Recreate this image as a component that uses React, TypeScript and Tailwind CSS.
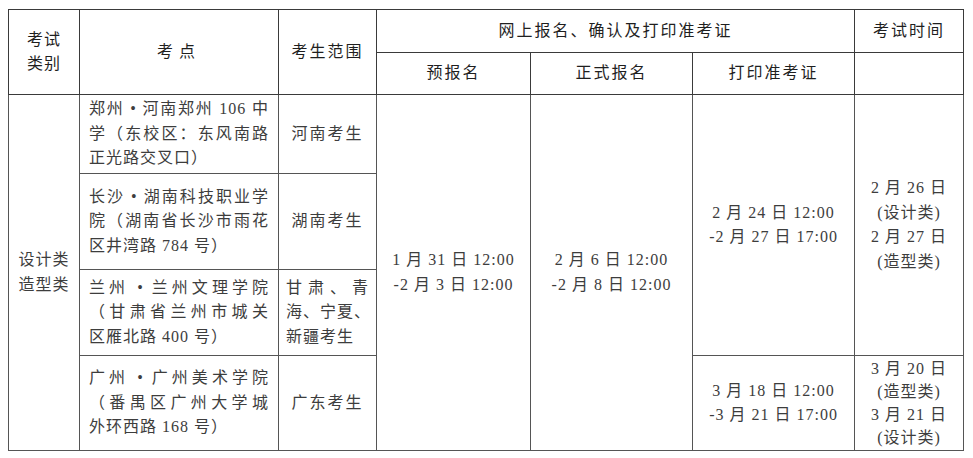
import React from 'react';

const font = { fontFamily: '"Liberation Serif", "Noto Sans CJK SC", serif' };

function Lines({ lines, justify = false }: { lines: string[]; justify?: boolean }) {
  return (
    <>
      {lines.map((l, i) => (
        <div
          key={i}
          className={
            'whitespace-nowrap' +
            (justify && i < lines.length - 1
              ? ' text-justify [text-align-last:justify] [text-justify:inter-character]'
              : '')
          }
        >
          {l}
        </div>
      ))}
    </>
  );
}

const th = 'border border-[#3a3a3a] text-center align-middle text-[#1f1f1f] whitespace-nowrap';
const td = 'border border-[#555] align-middle text-[#3d3d3d]';

const sites = [
  { lines: ['郑州 • 河南郑州 106 中', '学（东校区：东风南路', '正光路交叉口）'], scope: ['河南考生'], h: 'h-[79px]' },
  { lines: ['长沙 • 湖南科技职业学', '院（湖南省长沙市雨花', '区井湾路 784 号）'], scope: ['湖南考生'], h: 'h-[96px]' },
  { lines: ['兰州 • 兰州文理学院', '（甘肃省兰州市城关', '区雁北路 400 号）'], scope: ['甘肃、青', '海、宁夏、', '新疆考生'], h: 'h-[86px]' },
  { lines: ['广州 • 广州美术学院', '（番禺区广州大学城', '外环西路 168 号）'], scope: ['广东考生'], h: 'h-[95px]' },
];

export default function App() {
  return (
    <div className="bg-white w-[973px] h-[458px] pt-[9px] pl-[8px]" style={font}>
      <table className="table-fixed border-collapse w-[955px] text-[16px] leading-[24.5px] tracking-[1px]">
        <colgroup>
          <col className="w-[71px]" />
          <col className="w-[199px]" />
          <col className="w-[98px]" />
          <col className="w-[154px]" />
          <col className="w-[162px]" />
          <col className="w-[162px]" />
          <col className="w-[109px]" />
        </colgroup>
        <tbody>
          <tr className="h-[43px]">
            <td rowSpan={2} className={th}>
              <div>考试</div>
              <div>类别</div>
            </td>
            <td rowSpan={2} className={th + ' tracking-[6px]'}>考点</td>
            <td rowSpan={2} className={th + ' tracking-[2px]'}>考生范围</td>
            <td colSpan={3} className={th + ' tracking-[2px]'}>网上报名、确认及打印准考证</td>
            <td className={th + ' tracking-[2px]'}>考试时间</td>
          </tr>
          <tr className="h-[42px]">
            <td className={th + ' tracking-[2px]'}>预报名</td>
            <td className={th + ' tracking-[2px]'}>正式报名</td>
            <td className={th + ' tracking-[2px]'}>打印准考证</td>
            <td className={th}></td>
          </tr>
          {sites.map((s, i) => (
            <tr key={i} className={s.h}>
              {i === 0 && (
                <td rowSpan={4} className={td + ' text-center'}>
                  <div>设计类</div>
                  <div>造型类</div>
                </td>
              )}
              <td className={td + ' px-[9px]'}>
                <Lines lines={s.lines} justify />
              </td>
              <td className={td + (s.scope.length > 1 ? ' px-[7px]' : ' text-center tracking-[2px]')}>
                <Lines lines={s.scope} justify={s.scope.length > 1} />
              </td>
              {i === 0 && (
                <>
                  <td rowSpan={4} className={td + ' text-center whitespace-nowrap'}>
                    <div>1 月 31 日 12:00</div>
                    <div>-2 月 3 日 12:00</div>
                  </td>
                  <td rowSpan={4} className={td + ' text-center whitespace-nowrap'}>
                    <div>2 月 6 日 12:00</div>
                    <div>-2 月 8 日 12:00</div>
                  </td>
                  <td rowSpan={3} className={td + ' text-center whitespace-nowrap'}>
                    <div>2 月 24 日 12:00</div>
                    <div>-2 月 27 日 17:00</div>
                  </td>
                  <td rowSpan={3} className={td + ' text-center whitespace-nowrap'}>
                    <div>2 月 26 日</div>
                    <div>(设计类)</div>
                    <div>2 月 27 日</div>
                    <div>(造型类)</div>
                  </td>
                </>
              )}
              {i === 3 && (
                <>
                  <td className={td + ' text-center whitespace-nowrap'}>
                    <div>3 月 18 日 12:00</div>
                    <div>-3 月 21 日 17:00</div>
                  </td>
                  <td className={td + ' text-center whitespace-nowrap leading-[23px]'}>
                    <div>3 月 20 日</div>
                    <div>(造型类)</div>
                    <div>3 月 21 日</div>
                    <div>(设计类)</div>
                  </td>
                </>
              )}
            </tr>
          ))}
        </tbody>
      </table>
    </div>
  );
}
